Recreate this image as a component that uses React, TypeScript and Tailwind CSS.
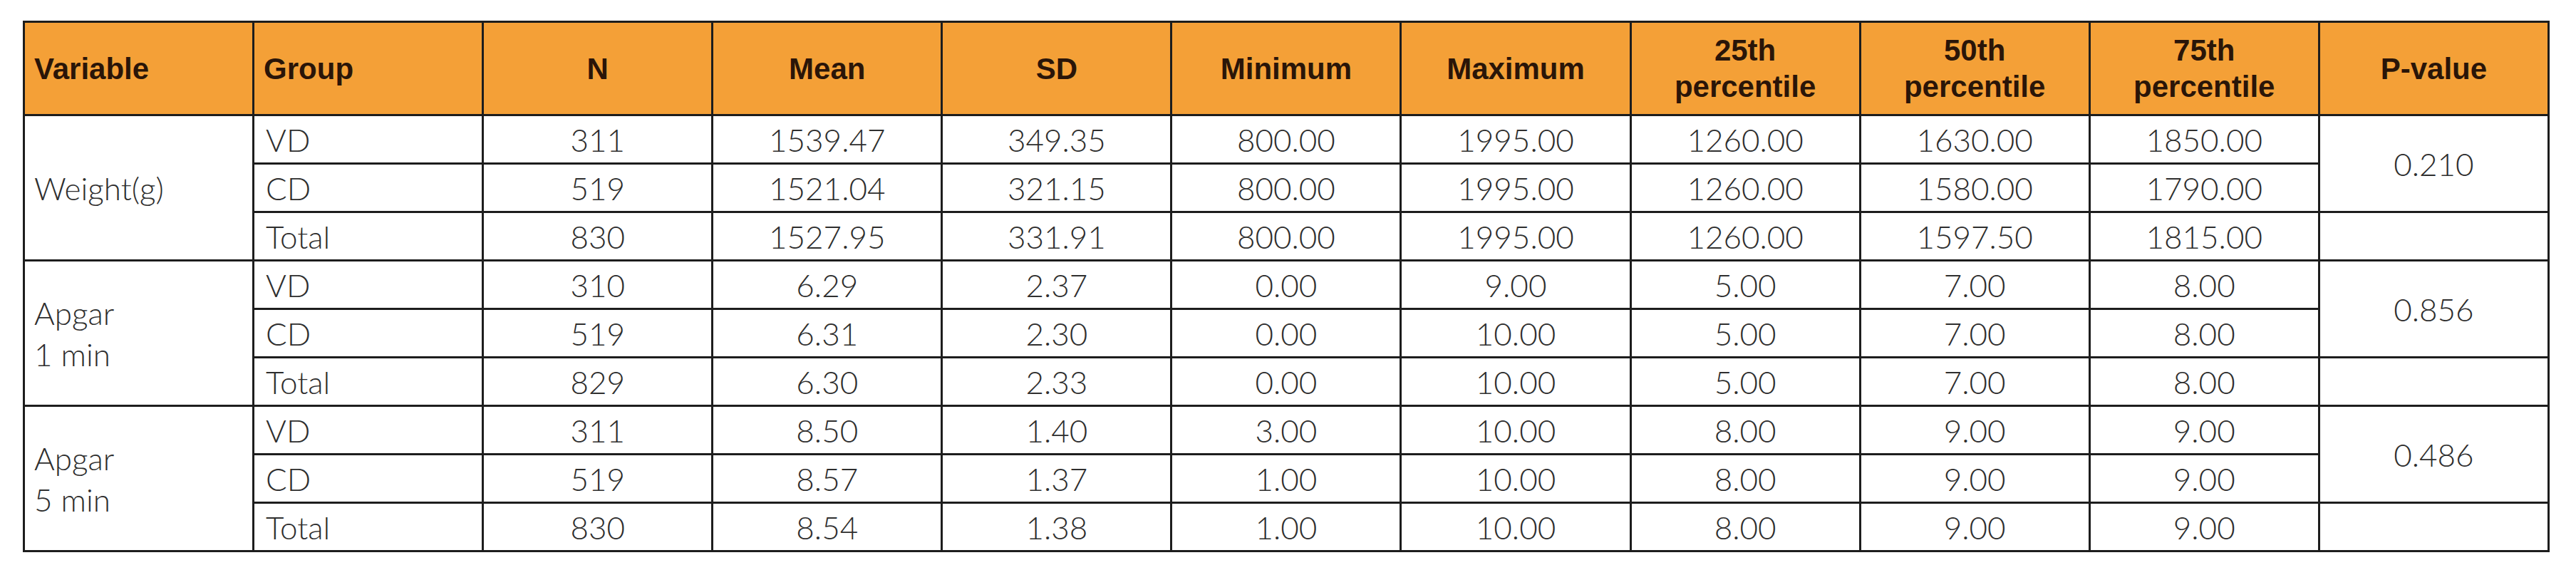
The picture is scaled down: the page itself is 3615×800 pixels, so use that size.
import React from "react";

type Row = { group: string; vals: string[] };
type Block = { variable: string[]; rows: Row[]; p: string };

const blocks: Block[] = [
  {
    variable: ["Weight(g)"],
    p: "0.210",
    rows: [
      { group: "VD", vals: ["311", "1539.47", "349.35", "800.00", "1995.00", "1260.00", "1630.00", "1850.00"] },
      { group: "CD", vals: ["519", "1521.04", "321.15", "800.00", "1995.00", "1260.00", "1580.00", "1790.00"] },
      { group: "Total", vals: ["830", "1527.95", "331.91", "800.00", "1995.00", "1260.00", "1597.50", "1815.00"] },
    ],
  },
  {
    variable: ["Apgar", "1 min"],
    p: "0.856",
    rows: [
      { group: "VD", vals: ["310", "6.29", "2.37", "0.00", "9.00", "5.00", "7.00", "8.00"] },
      { group: "CD", vals: ["519", "6.31", "2.30", "0.00", "10.00", "5.00", "7.00", "8.00"] },
      { group: "Total", vals: ["829", "6.30", "2.33", "0.00", "10.00", "5.00", "7.00", "8.00"] },
    ],
  },
  {
    variable: ["Apgar", "5 min"],
    p: "0.486",
    rows: [
      { group: "VD", vals: ["311", "8.50", "1.40", "3.00", "10.00", "8.00", "9.00", "9.00"] },
      { group: "CD", vals: ["519", "8.57", "1.37", "1.00", "10.00", "8.00", "9.00", "9.00"] },
      { group: "Total", vals: ["830", "8.54", "1.38", "1.00", "10.00", "8.00", "9.00", "9.00"] },
    ],
  },
];

const headers: { lines: string[]; left?: boolean }[] = [
  { lines: ["Variable"], left: true },
  { lines: ["Group"], left: true },
  { lines: ["N"] },
  { lines: ["Mean"] },
  { lines: ["SD"] },
  { lines: ["Minimum"] },
  { lines: ["Maximum"] },
  { lines: ["25th", "percentile"] },
  { lines: ["50th", "percentile"] },
  { lines: ["75th", "percentile"] },
  { lines: ["P-value"] },
];

const cell = "border-[3px] border-[#1d1d1d] p-0";

export default function App() {
  return (
    <div className="w-[3615px] h-[800px] bg-white pt-[29px] pl-[32px]">
      <table className="border-collapse table-fixed w-[3546px] font-['Lato','Liberation_Sans',sans-serif] text-[#2e2e2e]">
        <thead>
          <tr className="h-[131px] bg-[#f4a037]">
            {headers.map((h, i) => (
              <th
                key={i}
                className={`${cell} font-['Liberation_Sans',sans-serif] font-bold text-[42px] leading-[51px] text-[#2a1508] ${
                  h.left ? "text-left pl-[13px]" : "text-center"
                }`}
              >
                {h.lines.map((l, j) => (
                  <div key={j}>{l}</div>
                ))}
              </th>
            ))}
          </tr>
        </thead>
        <tbody className="text-[44px] font-light">
          {blocks.map((b, bi) =>
            b.rows.map((r, ri) => (
              <tr key={`${bi}-${ri}`} className="h-[68px]">
                {ri === 0 && (
                  <td rowSpan={3} className={`${cell} pl-[13px] text-left align-middle leading-[58px]`}>
                    {b.variable.map((l, j) => (
                      <div key={j}>{l}</div>
                    ))}
                  </td>
                )}
                <td className={`${cell} pl-[16px] text-left leading-[60px]`}>{r.group}</td>
                {r.vals.map((v, vi) => (
                  <td key={vi} className={`${cell} text-center leading-[60px]`}>
                    {v}
                  </td>
                ))}
                {ri === 0 && (
                  <td rowSpan={2} className={`${cell} text-center align-middle leading-[60px]`}>
                    {b.p}
                  </td>
                )}
                {ri === 2 && <td className={cell}></td>}
              </tr>
            ))
          )}
        </tbody>
      </table>
    </div>
  );
}
